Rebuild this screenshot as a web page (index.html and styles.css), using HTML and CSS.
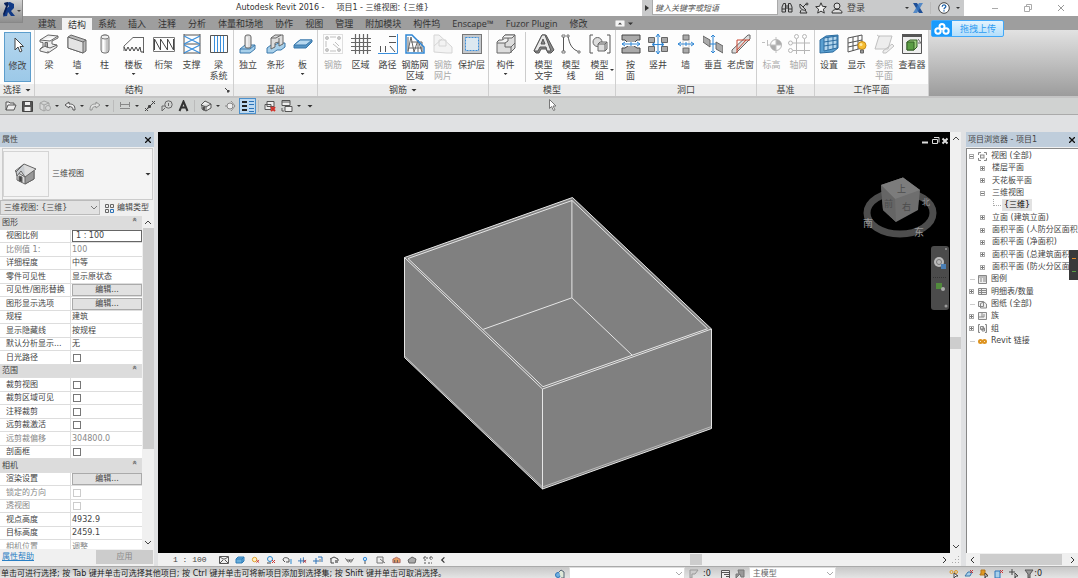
FILE: index.html
```html
<!DOCTYPE html>
<html lang="zh-CN">
<head>
<meta charset="utf-8">
<title>Autodesk Revit 2016</title>
<link rel="stylesheet" href="styles.css">
</head>
<body>
<header class="titlebar">
  <button class="app-button" aria-label="应用程序菜单"><svg width="22" height="22" viewBox="0 0 22 22"><path d="M4 3l6-1 4 2v4l-3 3 4 5h-4l-3-4-1 4-4 .500 2-7 4-3-1-2-3 1z" fill="#123a86"/><path d="M4 3l4-1v4L4 16 3 14l3-8z" fill="#0a1f55"/><path d="M17 10h4l-2 2z" fill="#444"/></svg></button>
  <h1 class="title">Autodesk Revit 2016 -<span class="doc">项目1 - 三维视图: {三维}</span></h1>
  <div class="infocenter">
    <button class="mini" aria-label="展开"><svg width="4" height="6"><path d="M0 0l4 3-4 3z" fill="#333"/></svg></button>
    <input class="search" type="text" placeholder="键入关键字或短语" aria-label="搜索">
    <button class="ic" aria-label="查找"><svg width="12" height="12" viewBox="0 0 12 12" fill="none" stroke="#333"><path d="M1 10V5l1.500-3.500h2V10zM7.500 10V1.500h2L11 5v5zM4.500 4h3M4.500 6h3M1 7h3M8 7h3"/></svg></button>
    <button class="ic" aria-label="通讯中心"><svg width="12" height="12" viewBox="0 0 12 12" fill="none" stroke="#333"><path d="M2 2l6 6c-4 1-7-2-6-6zM5 5l3-3M3 8l-1 3h7l-2-3"/><circle cx="9" cy="2" r="1"/></svg></button>
    <button class="ic" aria-label="收藏夹"><svg width="12" height="12" viewBox="0 0 12 12"><path d="M6 .8l1.500 3.500 3.800.4-2.900 2.500.9 3.900L6 9.100l-3.300 2 .9-3.900L.7 4.700l3.800-.4z" fill="#eee" stroke="#333"/></svg></button>
    <button class="ic login" aria-label="登录"><svg width="12" height="12" viewBox="0 0 12 12" fill="#ddd" stroke="#333"><path d="M1 11c0-3 2-3 3.500-3.500h3C9 8 11 8 11 11z"/><circle cx="6" cy="4" r="3"/></svg>登录</button>
    <span class="spring"></span>
    <span class="caret"></span>
    <button class="ic" aria-label="Exchange"><svg width="12" height="12" viewBox="0 0 12 12"><path d="M1 1h4l6 10H7z" fill="#1f4f96"/><path d="M7 1h4L5 11H1z" fill="#3778c4" opacity=".8"/></svg></button>
    <span class="vsep"></span>
    <button class="ic help" aria-label="帮助"><svg width="12" height="12" viewBox="0 0 12 12"><circle cx="6" cy="6" r="5.300" fill="#fff" stroke="#444"/><path d="M4.200 4.800c0-2.500 3.600-2.300 3.600-.3C7.800 5.800 6 5.800 6 7.300M6 8.200v1.200" fill="none" stroke="#1e62a8" stroke-width="1.300"/></svg></button>
    <span class="caret"></span>
  </div>
  <div class="winctl">
    <button aria-label="最小化"><svg width="8" height="8"><path d="M1 4.500h6" stroke="#aaa"/></svg></button>
    <button aria-label="还原"><svg width="8" height="8" fill="none" stroke="#aaa"><path d="M.5 2.500h5v5h-5zM2.500 2V.5h5v5H6"/></svg></button>
    <button aria-label="关闭"><svg width="8" height="8" stroke="#999"><path d="M1 1l6 6M7 1L1 7"/></svg></button>
  </div>
</header>

<nav class="tabs">
  <button>建筑</button><button class="on">结构</button><button>系统</button><button>插入</button><button>注释</button><button>分析</button><button>体量和场地</button><button>协作</button><button>视图</button><button>管理</button><button>附加模块</button><button>构件坞</button><button>Enscape™</button><button>Fuzor Plugin</button><button>修改</button>
  <button class="ribbon-toggle" aria-label="最小化功能区"><svg width="18" height="7"><rect x=".5" y=".5" width="9" height="6" rx="1" fill="#f4f4f4" stroke="#ccc"/><path d="M3 4.500h4L5 2.500z" fill="#444"/><path d="M13 2.500h5L15.500 5z" fill="#333"/></svg></button>
</nav>

<section class="ribbon">
  <div class="panel p-select"><div class="tools">
    <button class="tool modify"><svg width="20" height="20" viewBox="0 0 20 20"><path d="M7 3v12l3-3 2 5 2-1-2-4.500h3.500z" fill="#fff" stroke="#444"/></svg>修改</button>
  </div><div class="name">选择 <span class="caret"></span></div></div>

  <div class="panel p-struct"><div class="tools">
    <button class="tool"><svg width="20" height="20" viewBox="0 0 20 20" stroke="#666" fill="#eee"><path d="M1 6l8-5 10 1-8 5zM1 6v2l3 .5v4L1 15v2l8 2 9-6v-2l-5-1V7l6-3V2"/><path d="M1 15l5-3 5 2 7-3M9 17v2" fill="none"/><path d="M6 8.500h2.500v5L6 12z" fill="#aaa"/></svg>梁</button>
    <button class="tool"><svg width="20" height="20" viewBox="0 0 20 20" stroke="#666"><path d="M1 3l3-2 15 5v11l-3 2L1 14z" fill="#bbb"/><path d="M1 3l15 5v11L1 14z" fill="#e3e3e3"/><path d="M16 8l3-2" /></svg>墙<i class="caret"></i></button>
    <button class="tool n27"><svg width="20" height="20" viewBox="0 0 20 20" stroke="#777"><rect x="6" y="1" width="8" height="18" rx="3" fill="#ddd"/><path d="M8.500 4v14" stroke="#fff" stroke-width="2"/><path d="M12 4v14" stroke="#aaa"/><ellipse cx="10" cy="3" rx="4" ry="2" fill="#eee"/></svg>柱</button>
    <button class="tool n31"><svg width="22" height="20" viewBox="0 0 22 20" fill="none" stroke="#666"><path d="M1 12L10 3.500h11M1 12v5M20.500 3v16"/><path d="M1 13l2 4 2-4 2 4 2-4 2 4 2-4 2 4 2-4 1 5h3" stroke="#444"/></svg>楼板<i class="caret"></i></button>
    <button class="tool n29"><svg width="22" height="20" viewBox="0 0 22 20" fill="none" stroke="#444"><path d="M.5 3.500h21v14H.5z" stroke="#777"/><path d="M1.500 5v11M7.500 5v11M14.500 5v11M20.500 5v11M1.500 5l6 11M7.500 5l7 11M14.500 5l6 11" /></svg>桁架</button>
    <button class="tool n27"><svg width="20" height="20" viewBox="0 0 20 20" fill="none" stroke="#555"><path d="M2 0v20M18 0v20M2 1h16M2 10h16M2 19h16"/><path d="M2 2l16 8M18 2L2 10M2 11l16 8M18 11L2 19" stroke="#3a8fdc" stroke-width="1.300"/></svg>支撑</button>
    <button class="tool n27"><svg width="20" height="20" viewBox="0 0 20 20" fill="none" stroke="#3a8fdc"><path d="M5.500 1v18M8.500 1v18M11.500 1v18M14.500 1v18"/><path d="M1.500 1.500h17v17h-17z" stroke="#555"/></svg>梁<br>系统</button>
  </div><div class="name">结构<svg class="launcher" width="5" height="5"><path d="M0 0l3 3M4 2v2H2z" stroke="#444" fill="#444"/></svg></div></div>

  <div class="panel p-found"><div class="tools">
    <button class="tool"><svg width="20" height="20" viewBox="0 0 20 20"><path d="M2 15l5-4h10v4l-5 4H2z" fill="#a8d0ea" stroke="#3a79ac"/><path d="M2 15h10l5-4" fill="none" stroke="#3a79ac"/><rect x="7" y="1" width="6" height="13" rx="2" fill="#ddd" stroke="#666"/><path d="M9 3v10" stroke="#fff"/></svg>独立</button>
    <button class="tool n27"><svg width="20" height="20" viewBox="0 0 20 20"><path d="M1 14l4-3h3l5-2h6v4l-4 3h-4l-4 3H1z" fill="#a8d0ea" stroke="#3a79ac"/><path d="M5 4l4-3h8v9l-4 2V8l-4 1v4l-4 2z" fill="#ddd" stroke="#666"/><path d="M5 4h5l5-3M13 8V4" fill="none" stroke="#666"/></svg>条形</button>
    <button class="tool n27"><svg width="20" height="20" viewBox="0 0 20 20"><path d="M1 11l6-5h12v2l-6 6H1z" fill="#5594c4" stroke="#3a79ac"/><path d="M1 11l6-5h12l-6 5z" fill="#b7d8ef" stroke="#3a79ac"/></svg>板<i class="caret"></i></button>
  </div><div class="name">基础</div></div>

  <div class="panel p-rebar"><div class="tools">
    <button class="tool" disabled><svg width="20" height="20" viewBox="0 0 20 20" fill="none" stroke="#999"><rect x=".5" y=".5" width="19" height="19" stroke="#ccc"/><g fill="#aaa"><circle cx="4" cy="4" r="1.500"/><circle cx="16" cy="4" r="1.500"/><circle cx="4" cy="16" r="1.500"/><circle cx="16" cy="16" r="1.500"/></g><path d="M7 3h6M7 17h6M3 7v6M10 10l5 4M12 8l4 4"/></svg>钢筋</button>
    <button class="tool n27"><svg width="20" height="20" viewBox="0 0 20 20" stroke="#666"><path d="M4.500 0v20M8.500 0v20M12.500 0v20M16.500 0v20M0 4.500h20M0 8.500h20M0 12.500h20M0 16.500h20" stroke-width="1.200"/></svg>区域</button>
    <button class="tool n27"><svg width="20" height="20" viewBox="0 0 20 20" fill="none" stroke="#555"><path d="M11 2.500h7M11 8.500h7M2.500 12v6M7.500 12v6M12 12l5 6"/><path d="M0 19.500h19.500V0" stroke="#3a8fdc"/></svg>路径</button>
    <button class="tool"><svg width="20" height="20" viewBox="0 0 20 20" fill="none" stroke="#666"><path d="M3 3v15M6 3L3 17M6 3l3 15M13 6v12M17 8v10M9 18l4-12M13 6l4 12M6 8h11M4 14h13"/><path d="M1 1h6l12 12v6H1z" stroke="#2f86d4" stroke-width="1.500"/></svg>钢筋网<br>区域</button>
    <button class="tool" disabled><svg width="20" height="20" viewBox="0 0 20 20" fill="#eee" stroke="#bbb"><path d="M1 1h5l13 12v6h-5L1 18zM6 6h7v6H6zM1 12l8-7" /></svg>钢筋<br>网片</button>
    <button class="tool n29"><svg width="20" height="20" viewBox="0 0 20 20"><rect x=".5" y=".5" width="19" height="19" fill="#c4c8cc" stroke="#777"/><rect x="3.500" y="3.500" width="13" height="13" fill="#dce8f0" stroke="#3a8fdc" stroke-dasharray="2 1"/></svg>保护层</button>
  </div><div class="name">钢筋 <span class="caret"></span></div></div>

  <div class="panel p-model"><div class="tools">
    <button class="tool n31"><svg width="20" height="20" viewBox="0 0 20 20" stroke="#666"><path d="M1 8l2-2h4V3l2-2h10v13l-5 5H1z" fill="#ddd"/><path d="M7 6V3l2-2h10l-3 3H8M1 9h8l3-2V4" fill="#f4f4f4"/><path d="M9 9v4h6v6M15 13l4-4" fill="none"/></svg>构件<i class="caret"></i></button>
    <span class="divider"></span>
    <button class="tool n27"><svg width="22" height="20" viewBox="0 0 22 20" stroke="#555"><path d="M1 17L9 1h4l8 15-3 3h-3l-2-4H8l-2 4H3z" fill="#888"/><path d="M1 17L9 1h3l6 16h-4l-1-4H7l-2 4zM8 10h4l-2-5z" fill="#e8e8e8"/></svg>模型<br>文字</button>
    <button class="tool"><svg width="20" height="20" viewBox="0 0 20 20" fill="none" stroke="#555"><path d="M2.500 2v16M7 1c1 9 4 15 12 17"/><path d="M1 1h3v2H1zM1 17h3v2H1zM6 1h2v2H6zM17 17h2v2h-2z" fill="#fff" stroke="#777"/></svg>模型<br>线</button>
    <button class="tool n29 side"><svg width="22" height="20" viewBox="0 0 22 20" fill="none" stroke="#555"><path d="M4 1H1v18h3M18 1h3v18h-3"/><circle cx="8.500" cy="8" r="4.500" fill="#ddd" stroke="#666"/><path d="M9 10l2-2h7v7l-2 2H9z" fill="#ddd" stroke="#666"/><path d="M9 10h7v7M16 10l2-2" stroke="#666"/></svg>模型<br>组<i class="caret"></i></button>
  </div><div class="name">模型</div></div>

  <div class="panel p-open"><div class="tools">
    <button class="tool n27"><svg width="20" height="20" viewBox="0 0 20 20"><path d="M1 1h18v5h-3l-3 3v3l3 2h3v5H1v-5h3l3-2V9L4 6H1z" fill="#aaa" stroke="#444"/><path d="M0 10h20" stroke="#fff" stroke-width="4"/><path d="M1 10h18M4 8l-3 2 3 2M16 8l3 2-3 2M10 8v4" fill="none" stroke="#2f86d4"/></svg>按<br>面</button>
    <button class="tool"><svg width="20" height="20" viewBox="0 0 20 20"><g fill="#aaa" stroke="#666"><path d="M.5 3.500h6v5h-6zM13.500 3.500h6v5h-6zM.5 12.500h6v5h-6zM13.500 12.500h6v5h-6z"/></g><path d="M10 0v20M8 3l2-3 2 3M8 17l2 3 2-3M5 10.500h10M7 8.500l-3 2 3 2M13 8.500l3 2-3 2" fill="none" stroke="#2f86d4"/></svg>竖井</button>
    <button class="tool n27"><svg width="20" height="20" viewBox="0 0 20 20"><path d="M7 1h6v5H7zM7 14h6v5H7z" fill="#aaa" stroke="#666"/><path d="M7 6v8M13 6v8" stroke="#ccc"/><path d="M2 10h16M5 8l-3 2 3 2M15 8l3 2-3 2M10 8v4" fill="none" stroke="#2f86d4"/></svg>墙</button>
    <button class="tool"><svg width="20" height="20" viewBox="0 0 20 20"><path d="M0 2l7 4v7L0 8zM13 8l7 4v7l-7-4z" fill="#aaa" stroke="#666"/><path d="M10 1v18M8 3l2-2 2 2M8 17l2 2 2-2M7 10h6" fill="none" stroke="#2f86d4"/></svg>垂直</button>
    <button class="tool n27"><svg width="20" height="20" viewBox="0 0 20 20" fill="#ddd"><path d="M1 16L17 1h2v4L5 19H1z" stroke="#666"/><path d="M6 19V6h13M6 16l9-10" fill="none" stroke="#c8452f"/></svg>老虎窗</button>
  </div><div class="name">洞口</div></div>

  <div class="panel p-datum"><div class="tools">
    <button class="tool n27" disabled><svg width="22" height="20" viewBox="0 0 22 20"><circle cx="15" cy="11" r="5.500" fill="#fff" stroke="#888"/><path d="M15 11V5.500A5.500 5.500 0 0120.500 11zM15 11v5.500A5.500 5.500 0 019.500 11z" fill="#777"/><path d="M1 8.500h3M6.500 6v6M7 11h14M15 3v16" stroke="#999"/></svg>标高</button>
    <button class="tool n27" disabled><svg width="22" height="20" viewBox="0 0 22 20" fill="none" stroke="#888"><circle cx="8.500" cy="2.500" r="2"/><circle cx="16.500" cy="2.500" r="2"/><circle cx="2.500" cy="9" r="2"/><circle cx="2.500" cy="16.500" r="2"/><path d="M8.500 5v15M16.500 5v15M5 9h17M5 16.500h17"/></svg>轴网</button>
  </div><div class="name">基准</div></div>

  <div class="panel p-work"><div class="tools">
    <button class="tool"><svg width="20" height="20" viewBox="0 0 20 20"><path d="M1 6l6-4 12-1v13l-5 4-13 1z" fill="#5a9fd0" stroke="#2c6ca0"/><path d="M5 4l13-2v12L5 17z" fill="#b5d7ee" stroke="#2c6ca0"/><path d="M9 3v13M14 3v12M5 8l13-2M5 12l13-2" stroke="#2c6ca0"/></svg>设置</button>
    <button class="tool n27"><svg width="20" height="20" viewBox="0 0 20 20"><path d="M1 4l14-3v13L1 18zM6 3v14M11 2v13M1 9l14-3M1 13l14-3" fill="none" stroke="#555"/><circle cx="15" cy="11.500" r="4" fill="#f6bd32" stroke="#c78a13"/><path d="M13.500 16h3v3h-3z" fill="#999" stroke="#666"/><circle cx="14" cy="10.500" r="1.500" fill="#ffe9a0"/></svg>显示</button>
    <button class="tool" disabled><svg width="20" height="20" viewBox="0 0 20 20" fill="#e4e4e4" stroke="#999"><path d="M5 2h13l-4 13H1zM3 1l3 2M9 17l9-7 2 2-8 7h-3z"/></svg>参照<br>平面</button>
    <button class="tool"><svg width="20" height="20" viewBox="0 0 20 20"><path d="M.5.500h19v19H.5z" fill="#eee" stroke="#555"/><path d="M0 0h20v3H0z" fill="#555"/><path d="M5 8l3-2h7v7l-3 3H5z" fill="#9bcf7c" stroke="#355f27"/><path d="M5 8h7v8H5z" fill="#5a9d43" stroke="#355f27"/><path d="M16 5l3 4M16 9h4" stroke="#666"/></svg>查看器</button>
  </div><div class="name">工作平面</div></div>
  <div class="filler"></div>
</section>

<section class="qat">
  <button aria-label="打开"><svg width="12" height="10" viewBox="0 0 12 10" fill="#eee" stroke="#555"><path d="M1 9V1h3l1 1h4v2M1 9l2-5h8L9 9z"/></svg></button>
  <button aria-label="保存"><svg width="11" height="11" viewBox="0 0 11 11"><path d="M.5.500h10v10H.5z" fill="#555" stroke="#444"/><path d="M3 1h5v3H3zM2.500 6h6v4h-6z" fill="#eee"/></svg></button>
  <button disabled aria-label="同步"><svg width="12" height="12" viewBox="0 0 12 12" fill="#ddd" stroke="#777"><path d="M1 3l4-2 5 2v5l-5 3-4-2zM1 3l4 2 5-2M5 5v6"/><circle cx="9" cy="8" r="2.500"/></svg></button><span class="caret"></span>
  <button aria-label="放弃"><svg width="12" height="10" viewBox="0 0 12 10" fill="#eee" stroke="#555"><path d="M1 4l4-3v2c4 0 6 1 6 6H9C9 6 7 5.500 5 5.500V7z"/></svg></button><span class="caret"></span>
  <button disabled aria-label="重做"><svg width="12" height="10" viewBox="0 0 12 10" fill="#eee" stroke="#555"><path d="M11 4L7 1v2C3 3 1 4 1 9h2c0-3 2-3.500 4-3.500V7z"/></svg></button><span class="caret"></span>
  <span class="vsep"></span>
  <button aria-label="测量"><svg width="12" height="8" stroke="#888" fill="none"><path d="M1 2.500h10M1 6.500h10M1.500 0v5M10.500 0v5"/></svg></button><span class="caret"></span>
  <button aria-label="对齐尺寸标注"><svg width="12" height="12" stroke="#444"><path d="M1 11L11 1M1 8l3 3M8 1l3 3M4 8l1-3 2 2z" fill="#444"/></svg></button>
  <button aria-label="按类别标记"><svg width="12" height="12" viewBox="0 0 12 12" fill="none" stroke="#666"><circle cx="7.500" cy="4.500" r="3.700"/><path d="M7.500 3v3M1 11V6h3M1 11l3-3"/></svg></button>
  <button aria-label="文字"><svg width="11" height="12" viewBox="0 0 11 12" stroke="#333" stroke-width="2" fill="none"><path d="M1.500 11l4-9.500 4 9.500M3 7.500h5"/></svg></button>
  <span class="vsep"></span>
  <button aria-label="默认三维视图"><svg width="12" height="12" viewBox="0 0 12 12" fill="#eee" stroke="#555"><path d="M1 5l4-4 6 3v4l-5 3-4-2V5M1 5l5 2 5-3M6 7v4"/><path d="M3 7h1.500v3H3z" fill="#444"/></svg></button><span class="caret"></span>
  <button aria-label="剖面"><svg width="12" height="12" fill="#eee" stroke="#888"><path d="M0 6h2M6 1l4 5-4 5"/><circle cx="5" cy="6" r="3"/></svg></button>
  <button class="on" aria-label="细线"><svg width="12" height="12"><path d="M0 2h5M0 6h5M0 10h5" stroke="#222" stroke-width="2"/><path d="M7 1.500h5M7 4.500h5M7 8.500h5M7 11.500h5" stroke="#2c73b8"/></svg></button>
  <span class="vsep"></span>
  <button aria-label="关闭隐藏窗口"><svg width="12" height="12" fill="#eee" stroke="#555"><path d="M3 1.500h7v5H3zM1 4.500h6v5H1z"/><path d="M7 7l4 4M11 7l-4 4" stroke="#d2322a" stroke-width="2"/></svg></button>
  <button aria-label="切换窗口"><svg width="12" height="12" fill="#eee" stroke="#555"><path d="M1 .5h8v5H1zM1 2h8M4 6.500h7v5H4zM1 8v3h2"/></svg></button><span class="caret"></span>
  <span class="caret big"></span>
</section>

<main class="work">
  <aside class="props">
    <h2 class="dock-title">属性<button aria-label="关闭属性"><svg width="6" height="6" stroke="#111"><path d="M0 0l6 6M6 0L0 6" stroke-width="1.300"/></svg></button></h2>
    <button class="type"><span class="thumb"><svg width="24" height="24" viewBox="0 0 24 24" stroke="#666"><path d="M3 10v8l8 4 9-5V9l-8-5z" fill="#ddd"/><path d="M11 13v9l9-5V8z" fill="#999"/><path d="M1 9l9-7 12 5-11 8z" fill="#ddd"/><path d="M10 2l-8 8 1 4 4-5 4 6" fill="#c9cdd1"/><path d="M5 14l3 1v5l-3-1z" fill="#444"/></svg></span><span>三维视图</span><span class="caret big"></span></button>
    <div class="instance"><select aria-label="实例"><option>三维视图: {三维}</option></select><button><svg width="9" height="9" fill="#eee" stroke="#666"><path d="M.5.500h3v3h-3zM5.500.500h3v3h-3zM.5 5.500h3v3h-3z"/><path d="M5.500 5.500h3v3h-3z" stroke="#2c73b8"/></svg>编辑类型</button></div>
    <div class="grid-wrap">
      <div class="grid-clip"><table class="grid">
        <tr class="g"><th colspan="2">图形<b>«</b></th></tr>
        <tr><th><label for="scale">视图比例</label></th><td><input id="scale" class="val" type="text" value="1 : 100"></td></tr>
        <tr class="off"><th>比例值 1:</th><td>100</td></tr>
        <tr><th>详细程度</th><td>中等</td></tr>
        <tr><th>零件可见性</th><td>显示原状态</td></tr>
        <tr><th>可见性/图形替换</th><td><button>编辑...</button></td></tr>
        <tr><th>图形显示选项</th><td><button>编辑...</button></td></tr>
        <tr><th>规程</th><td>建筑</td></tr>
        <tr><th>显示隐藏线</th><td>按规程</td></tr>
        <tr><th>默认分析显示...</th><td>无</td></tr>
        <tr><th><label for="c1">日光路径</label></th><td><input id="c1" type="checkbox"></td></tr>
        <tr class="g"><th colspan="2">范围<b>«</b></th></tr>
        <tr><th><label for="c2">裁剪视图</label></th><td><input id="c2" type="checkbox"></td></tr>
        <tr><th><label for="c3">裁剪区域可见</label></th><td><input id="c3" type="checkbox"></td></tr>
        <tr><th><label for="c4">注释裁剪</label></th><td><input id="c4" type="checkbox"></td></tr>
        <tr><th><label for="c5">远剪裁激活</label></th><td><input id="c5" type="checkbox"></td></tr>
        <tr class="off"><th>远剪裁偏移</th><td>304800.0</td></tr>
        <tr><th><label for="c6">剖面框</label></th><td><input id="c6" type="checkbox"></td></tr>
        <tr class="g"><th colspan="2">相机<b>«</b></th></tr>
        <tr><th>渲染设置</th><td><button>编辑...</button></td></tr>
        <tr class="off"><th><label for="c7">锁定的方向</label></th><td><input id="c7" type="checkbox" disabled></td></tr>
        <tr class="off"><th><label for="c8">透视图</label></th><td><input id="c8" type="checkbox" disabled></td></tr>
        <tr><th>视点高度</th><td>4932.9</td></tr>
        <tr><th>目标高度</th><td>2459.1</td></tr>
        <tr class="off"><th>相机位置</th><td>调整</td></tr>
      </table></div>
      <div class="vscroll"><svg width="6" height="4"><path d="M0 4l3-3 3 3" fill="none" stroke="#444"/></svg><span class="bar"></span><svg width="6" height="4"><path d="M0 0l3 3 3-3" fill="none" stroke="#444"/></svg></div>
    </div>
    <div class="props-foot"><a href="#help">属性帮助</a><button disabled>应用</button></div>
  </aside>

  <section class="view">
    <div class="canvas">
      <svg class="model" viewBox="158 132 792 421" preserveAspectRatio="xMidYMid slice">
        <path d="M404.500 257.500L572.500 197.500 711.500 329V428.500L542.500 489 404.500 357.500z" fill="#808080"/>
        <g fill="none" stroke="#e6e6e6">
          <path d="M404.500 257.500L572.500 197.500 711.500 329 542.500 389z"/>
          <path d="M408 258.500L572 200.500 707.500 328.700 543 386.700z"/>
          <path d="M404.500 257.500V357.500L542.500 489 711.500 428.500V329M542.500 389V489"/>
          <path d="M404.500 356L542.500 487 711.500 426.500" stroke="#bbb"/>
          <path d="M571.900 200.500V297.800L483.300 329.300M571.900 297.800L632.300 355.300"/>
        </g>
      </svg>
      <div class="mdi"><svg width="26" height="8" stroke="#ddd" fill="none"><path d="M0 5.500h6" stroke-width="2"/><path d="M10.500 2.500h5v4h-5zM12 .5h5v5"/><path d="M20.500 1.500l5 5M25.500 1.500l-5 5" stroke-width="2"/></svg></div>
      <svg class="cube" width="80" height="66" viewBox="860 175 80 66">
        <ellipse cx="900" cy="213" rx="33" ry="21" fill="none" stroke="#4d4d4d" stroke-width="7"/>
        <path d="M881 185l22-7.500 17 12.500-2 20-22 12-13-12z" fill="#6e6e6e"/>
        <path d="M881 185l22-7.500 17 12.500-25 9z" fill="#7c7c7c"/><path d="M881 185l14 14 1 23-13-12z" fill="#656565"/>
        <g font-size="9" fill="#4c4c4c"><text x="897" y="192">上</text><text x="884" y="207">前</text><text x="902" y="210">右</text></g>
        <g font-size="10" fill="#999"><text x="863" y="227">南</text><text x="914" y="236">东</text><text x="922" y="205" font-size="8">北</text></g>
      </svg>
      <div class="navbar"><svg width="18" height="64" viewBox="0 0 18 64"><circle cx="15" cy="3" r="1" fill="#999"/><circle cx="8" cy="16" r="5" fill="#bbb"/><circle cx="8" cy="16" r="2.500" fill="#bbb" stroke="#777"/><path d="M10 18h5v5h-5z" fill="#4a7fb5"/><path d="M2 31.500h14" stroke="#333" stroke-dasharray="1 1"/><path d="M5 37h6v6H5z" fill="#518a3c"/><circle cx="12" cy="43" r="2" fill="#aaa"/><circle cx="15" cy="60" r="1.500" fill="#999"/></svg></div>
    </div>
    <div class="vscroll right"><svg width="6" height="4"><path d="M0 4l3-3 3 3" fill="none" stroke="#444"/></svg><span class="bar"></span><svg width="6" height="4"><path d="M0 0l3 3 3-3" fill="none" stroke="#444"/></svg></div>
    <div class="viewbar">
      <span class="scale">1 : 100</span>
      <div class="vicons">
        <svg viewBox="0 0 10 8"><path d="M.5.500h9v7h-9zM1 1l3 2h2l3-2M1 7l3-3M9 7L6 4" stroke="#555" fill="#eee"/></svg>
        <svg viewBox="0 0 10 8"><path d="M1 3l2-2h6v4L7 7H1z" fill="#68aedb" stroke="#2f7db8"/><path d="M1 3h6v4M7 3l2-2" stroke="#2f7db8" fill="none"/></svg>
        <svg viewBox="0 0 10 8"><circle cx="4" cy="3.500" r="2.500" fill="#fff1c0" stroke="#dc9a1e"/><path d="M6 4l3 3M9 4L6 7" stroke="#c33"/></svg>
        <svg viewBox="0 0 10 8"><circle cx="4" cy="3" r="2.500" fill="#eee" stroke="#2c8bd0"/><path d="M1 7h4" stroke="#444"/><path d="M6 4l3 3M9 4L6 7" stroke="#c33"/></svg>
        <svg viewBox="0 0 10 8"><path d="M1 4c0-3 4-3 6-1v3H4M1 4l2 2" fill="#eee" stroke="#555"/><path d="M9 3v5" stroke="#2c8bd0"/></svg>
        <svg viewBox="0 0 10 8"><path d="M0 5h9M3 2v6M6 1v6" stroke="#2c73b8"/><path d="M6 4l3 3M9 4L6 7" stroke="#c33"/></svg>
        <svg viewBox="0 0 10 8"><path d="M0 5h6M3 2v6M5 1h4v5" stroke="#2c73b8" fill="none"/><path d="M7 3v3" stroke="#777"/></svg>
        <svg viewBox="0 0 10 8"><path d="M1 3l4-2 4 2v2M2 3v4h3" fill="none" stroke="#444"/><path d="M6 4h3v3H6z" fill="#888"/></svg>
        <svg viewBox="0 0 10 8"><path d="M0 2l2 2h6l2-2M2 4c1 3 3 3 3 0 0 3 3 3 3 0" fill="none" stroke="#555"/></svg>
        <svg viewBox="0 0 10 8"><circle cx="5" cy="3" r="1.700" fill="#cbe7fa" stroke="#3a8fdc"/><path d="M5 5v3" stroke="#555"/></svg>
        <svg viewBox="0 0 10 8"><path d="M1 1h6v6H1zM4 3l5 4" fill="#eee" stroke="#777"/></svg>
        <svg viewBox="0 0 10 8"><path d="M1 7V3l4-2 4 2v4z" fill="#e8a066" stroke="#a66"/><path d="M3 7V4M6 7V4" stroke="#555"/></svg>
        <svg viewBox="0 0 10 8"><path d="M1 4l4-3 4 2-1 4H2z" fill="#aaa" stroke="#666"/></svg>
        <svg viewBox="0 0 10 8"><path d="M2 0v8M0 2h10M8 0v4M5 7h4" stroke="#555" stroke-dasharray="2 1"/></svg>
        <svg viewBox="0 0 10 8"><path d="M6 1L3 4l3 3" fill="none" stroke="#333" stroke-width="1.300"/></svg>
      </div>
      <div class="htrack"><span class="bar"></span></div>
      <svg class="arr" width="4" height="6"><path d="M0 0l3 3-3 3" fill="none" stroke="#333"/></svg>
    </div>
    <div class="grip"><svg width="8" height="8" fill="#aaa"><path d="M6 0h1v1H6zM3 3h1v1H3zM6 3h1v1H6zM0 6h1v1H0zM3 6h1v1H3zM6 6h1v1H6z"/></svg></div>
  </section>

  <aside class="browser">
    <h2 class="dock-title">项目浏览器 - 项目1<button aria-label="关闭项目浏览器"><svg width="6" height="6" stroke="#111"><path d="M0 0l6 6M6 0L0 6" stroke-width="1.300"/></svg></button></h2>
    <ul class="tree">
      <li class="l0"><i class="x minus"></i><svg viewBox="0 0 9 9"><path d="M.5 3V.5H3M6 .5h2.500V3M8.500 6v2.500H6M3 8.500H.5V6" /><rect x="2.500" y="3" width="3.500" height="3"/></svg>视图 (全部)</li>
      <li class="l1"><i class="x plus"></i>楼层平面</li>
      <li class="l1"><i class="x plus"></i>天花板平面</li>
      <li class="l1"><i class="x minus"></i>三维视图</li>
      <li class="l2"><i class="elbow"></i><span class="sel">{三维}</span></li>
      <li class="l1"><i class="x plus"></i>立面 (建筑立面)</li>
      <li class="l1"><i class="x plus"></i>面积平面 (人防分区面积)</li>
      <li class="l1"><i class="x plus"></i>面积平面 (净面积)</li>
      <li class="l1"><i class="x plus"></i>面积平面 (总建筑面积)</li>
      <li class="l1"><i class="x plus"></i>面积平面 (防火分区面积)</li>
      <li class="l0"><i class="x none"></i><svg viewBox="0 0 9 9"><path d="M.5.500h8v8h-8zM1 2h7M2 4h2M5 4h3M2 6h2M5 6h3"/></svg>图例</li>
      <li class="l0"><i class="x plus"></i><svg viewBox="0 0 9 9"><path d="M.5 1.500h8v6h-8zM.5 3.500h8M.5 5.500h8M3.500 2v5"/></svg>明细表/数量</li>
      <li class="l0"><i class="x none"></i><svg viewBox="0 0 9 9"><path d="M.5 1.500h5v5h-5zM2.500 3.500L6 2l2.500 2v4h-6z"/></svg>图纸 (全部)</li>
      <li class="l0"><i class="x plus"></i><svg viewBox="0 0 9 9"><path d="M.5.500h8v7h-8zM4 1v4M1 5h5M6 2v3"/></svg>族</li>
      <li class="l0"><i class="x plus"></i><svg viewBox="0 0 9 9"><path d="M2 .5H.5v8H2M7 .5h1.500v8H7M2.500 2.500h3v3h-3zM4 4h2.500v3H4z"/></svg>组</li>
      <li class="l0"><i class="x none"></i><svg class="link" viewBox="0 0 9 9"><circle cx="2.500" cy="4.500" r="1.500"/><circle cx="6.500" cy="4.500" r="1.500"/></svg>Revit 链接</li>
    </ul>
    <div class="hscroll"><svg width="4" height="6"><path d="M3 0L0 3l3 3" fill="none" stroke="#333"/></svg><span class="bar"></span><svg width="4" height="6"><path d="M0 0l3 3-3 3" fill="none" stroke="#333"/></svg></div>
    <div class="side-tab"><span></span><span class="green"></span></div>
  </aside>
</main>

<footer class="status">
  <span class="hint">单击可进行选择; 按 Tab 键并单击可选择其他项目; 按 Ctrl 键并单击可将新项目添加到选择集; 按 Shift 键并单击可取消选择。</span>
  <div class="worksets">
    <svg width="10" height="10" viewBox="0 0 10 10"><circle cx="3" cy="6" r="2.500" fill="#6fb0e0" stroke="#2c73b8"/><path d="M4 3l2-2 3 2v6H6" fill="#dfe8d8" stroke="#567"/></svg>
    <select class="ws" aria-label="工作集"><option></option></select>
    <svg width="10" height="10" viewBox="0 0 10 10" stroke="#999" fill="#ccc"><path d="M1 1h8L6 5H3v4H1z"/></svg>
    <span class="cnt">:0</span>
    <svg width="10" height="10" viewBox="0 0 10 10" stroke="#555" fill="#eee"><path d="M.5 1.500h8v8h-8zM.5 3.500h8M3 5.500h5M5 7.500h3"/></svg>
    <svg width="10" height="10" viewBox="0 0 10 10" stroke="#777" fill="#999"><path d="M3 1h6v7H6L5 5 1 9V5h3z"/></svg>
    <select class="opt" aria-label="设计选项"><option>主模型</option></select>
  </div>
  <div class="picks">
    <svg viewBox="0 0 10 10"><circle cx="2.500" cy="3" r="1.500" fill="none" stroke="#e09a22"/><circle cx="7" cy="3" r="1.500" fill="none" stroke="#e09a22"/><path d="M5 4v5l2-2h2z" fill="#fff" stroke="#444"/></svg>
    <svg viewBox="0 0 10 10"><path d="M1 7l3-4h4L6 7z" fill="#a8d0ea" stroke="#3a79ac"/><path d="M6 1l3 3M9 1L6 4" stroke="#c33"/></svg>
    <svg viewBox="0 0 10 10"><path d="M2 1h4v4h2v1H1V5h1z" fill="#e09a22" stroke="#b5761a"/><path d="M6 4v5l1-2h2z" fill="#fff" stroke="#444"/></svg>
    <svg viewBox="0 0 10 10"><path d="M1 2h5v7H1z" fill="#a8d0ea" stroke="#2c73b8"/><path d="M6 1l3 3M9 1L6 4" stroke="#c33"/></svg>
    <svg viewBox="0 0 10 10"><path d="M0 3h6M3 0v6" stroke="#444"/><path d="M6 4v5l1-2h2z" fill="#fff" stroke="#444"/></svg>
    <svg viewBox="0 0 10 10"><path d="M1 1h8L6 5v4H4V5z" fill="#999" stroke="#555"/></svg>
    <span>:0</span>
  </div>
</footer>

<button class="upload"><span><svg width="16" height="12" viewBox="0 0 16 12" fill="none" stroke="#fff" stroke-width="2"><circle cx="8" cy="3.500" r="2.500"/><circle cx="4" cy="8" r="2.700"/><circle cx="12" cy="8" r="2.700"/></svg></span>拖拽上传</button>
<svg class="pointer" width="8" height="12" viewBox="0 0 8 12"><path d="M.5.500v9l2-2 2 4 1.500-.700-2-3.800h3z" fill="#fff" stroke="#777"/></svg>
</body>
</html>
```
FILE: styles.css
```css
* { box-sizing: border-box; }
body {
  margin: 0; height: 100vh; overflow: hidden; display: flex; flex-direction: column;
  position: relative; background: #e0e1e3; color: #444;
  font: 9px/12px "Open Sans", "Noto Sans CJK SC", sans-serif;
}
button, input, select { font: inherit; color: inherit; margin: 0; padding: 0; border: 0; background: none; border-radius: 0; }
button { display: flex; align-items: center; justify-content: center; white-space: nowrap; }
svg { display: block; flex: none; }
h1, h2, ul { margin: 0; padding: 0; font-size: inherit; font-weight: normal; }
.caret { flex: none; width: 4px; height: 2px; background: #333; clip-path: polygon(0 0, 100% 0, 50% 100%); }
.caret.big { width: 6px; height: 3px; }
.vsep { width: 1px; height: 12px; background: #bbb; }

/* title bar */
.titlebar { flex: none; display: flex; height: 16px; background: #fff; position: relative; }
.app-button { position: absolute; left: 0; top: 0; z-index: 2; width: 23px; height: 23px; background: linear-gradient(#d2d2d2, #8e8e8e); border: 1px solid #888; border-top: 0; border-left: 0; }
.title { flex: 1; padding-left: 236px; font: 8px/16px "DejaVu Sans", "Noto Sans CJK SC", sans-serif; white-space: nowrap; color: #333; }
.doc { margin-left: 12px; }
.infocenter { display: flex; align-items: center; width: 322px; background: #c9cacb; }
.mini { width: 10px; height: 16px; }
.search { width: 126px; height: 15px; align-self: flex-start; background: #fff; border: 1px solid #aaa; border-top: 0; padding-left: 2px; font-size: 8px; font-style: italic; }
.search::placeholder { color: #555; opacity: 1; }
.ic { width: 17px; height: 16px; }
.login { width: auto; gap: 4px; padding-left: 2px; }
.spring { flex: 1; }
.infocenter .vsep { margin: 0 4px; }
.help + .caret { margin: 0 4px; }
.winctl { display: flex; width: 114px; padding-left: 14px; }
.winctl button { width: 33px; height: 16px; }

/* tabs */
.tabs { flex: none; display: flex; height: 14px; padding-left: 32px; background: #9e9e9e; align-items: stretch; }
.tabs button { padding: 0 6px; line-height: 13px; color: #333; }
.tabs .on { background: #f2f2f2; margin-top: 2px; }
.tabs .ribbon-toggle { margin-left: 16px; }

/* ribbon */
.ribbon { flex: none; display: flex; height: 68px; background: #fdfdfd; border-bottom: 2px solid #c4c4c4; }
.panel { flex: none; display: flex; flex-direction: column; border-right: 1px solid #cfcfcf; }
.p-select { width: 35px; } .p-struct { width: 199px; } .p-found { width: 84px; } .p-rebar { width: 171px; }
.p-model { width: 127px; } .p-open { width: 141px; } .p-datum { width: 58px; } .p-work { width: 114px; }
.tools { flex: 1; display: flex; }
.p-rebar .tools, .p-model .tools, .p-open .tools, .p-datum .tools { padding-left: 1px; }
.tool { flex: none; width: 28px; flex-direction: column; justify-content: flex-start; padding-top: 4px; line-height: 11px; position: relative; }
.tool svg { margin-bottom: 5px; }
.tool .caret { margin-top: 3px; }
.n27 { width: 27px; } .n29 { width: 29px; } .n31 { width: 31px; }
.tool:disabled { color: #aaa; }
.tool:disabled svg { opacity: .6; }
.tool.side .caret { position: absolute; right: 0; top: 36px; }
.tool.modify { width: 27px; margin: 2px 0 2px 4px; padding-top: 2px; background: linear-gradient(#b4d6ee, #9cc9e8); border: 1px solid #5c9dcc; }
.divider { width: 1px; margin: 2px 4px; background: #ccc; }
.name { height: 12px; background: #ededed; display: flex; align-items: center; justify-content: center; gap: 4px; position: relative; }
.name .caret { width: 6px; height: 3px; }
.launcher { position: absolute; right: 3px; top: 4px; }
.filler { flex: 1; background: linear-gradient(#e2e2e2, #9c9c9c); }

/* quick access */
.qat { flex: none; display: flex; align-items: center; height: 17px; padding-left: 2px; background: #d0d2d1; border-bottom: 1px solid #aaa; }
.qat button { width: 17px; height: 16px; }
.qat button:disabled { opacity: .5; }
.qat .caret { margin: 0 2px; }
.qat .vsep { margin: 0 2px; }
.qat .on { background: #bcd8f0; border: 1px solid #4b90cc; }
.qat .big { margin-left: 4px; }

/* work area */
.work { flex: 1; min-height: 0; display: flex; padding-top: 17px; font: 8px/12px "DejaVu Sans", "Noto Sans CJK SC", sans-serif; }
.dock-title { flex: none; display: flex; align-items: center; justify-content: space-between; height: 15px; padding: 0 3px 0 2px; background: #bfcddb; }
.props { flex: none; width: 154px; display: flex; flex-direction: column; background: #f0f0f0; }
.type { height: 52px; margin: 1px 1px 0 2px; border: 1px solid #ccc; background: #f4f4f4; justify-content: flex-start; gap: 3px; }
.thumb { width: 46px; height: 46px; border: 1px solid #d4d4d4; display: grid; place-items: center; }
.type .caret { margin: 0 1px 0 auto; }
.instance { display: flex; height: 16px; }
select { appearance: none; }
.instance select { width: 100px; height: 15px; padding-left: 3px; border: 1px solid #bbb; background: #e2e2e2 url("data:image/svg+xml,%3Csvg xmlns='http://www.w3.org/2000/svg' width='6' height='4'%3E%3Cpath d='M0 0l3 3 3-3' fill='none' stroke='%23777'/%3E%3C/svg%3E") no-repeat right 2px center; }
.instance button { flex: 1; gap: 3px; }
.grid-wrap { flex: 1; min-height: 0; display: flex; }
.grid-clip { flex: 1; overflow: hidden; background: #fff; }
.grid { width: 100%; border-spacing: 0; table-layout: fixed; }
.grid tr { height: 13px; }
.grid tr:nth-child(odd) { height: 14px; }
.grid th, .grid td { padding: 0; height: inherit; line-height: 12px; border-bottom: 1px solid #ddd; text-align: left; font-weight: normal; white-space: nowrap; vertical-align: middle; }
.grid th { width: 71px; padding-left: 6px; border-right: 1px solid #ddd; }
.grid td { padding-left: 1px; }
.grid .g th { padding-left: 2px; background: #dcdcdc; }
.g b { float: right; margin-right: 2px; width: 6px; height: 10px; line-height: 10px; font-weight: normal; writing-mode: vertical-rl; }
.off { color: #888; }
.val { display: block; width: 100%; height: 12px; border: 1px solid #666; padding-left: 3px; }
.grid button { width: 100%; height: 12px; background: #e1e1e1; border: 1px solid #aaa; line-height: 10px; }
input[type=checkbox] { appearance: none; display: block; width: 8px; height: 8px; margin-left: 1px; border: 1px solid #777; background: #fff; }
input[type=checkbox]:disabled { border-color: #ccc; }
.vscroll { flex: none; width: 12px; display: flex; flex-direction: column; align-items: center; padding: 4px 0; background: #f0f0f0; }
.vscroll .bar { width: 11px; height: 68%; margin: 4px 0 auto; background: #cdcdcd; }
.props-foot { flex: none; height: 17px; display: flex; justify-content: space-between; align-items: center; padding: 0 1px 2px 2px; }
.props-foot a { color: #2a7fc4; }
.props-foot button { width: 57px; height: 14px; background: #ccc; color: #888; }

.view { flex: 1; min-width: 0; margin-left: 4px; display: grid; grid-template: minmax(0, 1fr) 13px / minmax(0, 1fr) 11px; background: #f0f0f0; }
.canvas { position: relative; background: #000; overflow: hidden; }
.model { width: 100%; height: 100%; }
.mdi { position: absolute; right: 2px; top: 5px; }
.cube { position: absolute; right: 10px; top: 43px; }
.navbar { position: absolute; right: 1px; top: 114px; background: #4b4b4b; border-radius: 3px; }
.vscroll.right { width: 11px; }
.vscroll.right .bar { height: 12px; margin: auto 0; }
.viewbar { display: flex; align-items: center; padding: 0 3px 0 15px; }
.scale { width: 46px; font: 8px/12px "Liberation Mono", monospace; }
.vicons { display: flex; gap: 6px; }
.vicons svg { width: 10px; height: 8px; }
.vicons svg:nth-child(3n) { width: 9px; }
.htrack { flex: 1; display: flex; justify-content: center; }
.htrack .bar { width: 12px; height: 11px; background: #cdcdcd; }
.grip { display: grid; place-items: center; }

.browser { flex: none; width: 112px; margin-left: 5px; display: flex; flex-direction: column; position: relative; background: #f0f0f0; }
.tree { flex: 1; min-height: 0; overflow: hidden; list-style: none; margin-top: 1px; padding-top: 1px; background: #fff; border: 1px solid #888; border-width: 1px 0 0 1px; }
.tree li { display: flex; align-items: center; height: 12px; white-space: nowrap; gap: 4px; }
.tree li:nth-child(3n) { height: 13px; }
.l0 { padding-left: 2px; }
.l1 { padding-left: 13px; }
.l2 { padding-left: 26px; }
.x { flex: none; width: 5px; height: 5px; border: 1px solid #aaa; position: relative; }
.x::before { content: ""; position: absolute; left: 0; top: 1px; width: 3px; height: 1px; background: #777; }
.x.plus::after { content: ""; position: absolute; left: 1px; top: 0; width: 1px; height: 3px; background: #777; }
.x.none { border-color: transparent; } .x.none::before { background: #ccc; width: 5px; }
.l1 .x { margin-right: 3px; }
.elbow { width: 8px; height: 7px; margin-bottom: 6px; border: 1px dotted #aaa; border-width: 0 0 1px 1px; }
.tree svg { width: 9px; height: 9px; fill: #eee; stroke: #888; }
.tree svg.link { fill: none; stroke: #dd9320; stroke-width: 2; }
.sel { padding: 0 2px; margin-left: -3px; background: #e2e2e2; color: #000; }
.hscroll { flex: none; height: 13px; display: flex; align-items: center; padding: 0 3px 0 5px; gap: 5px; }
.hscroll .bar { width: 82px; height: 11px; margin-right: auto; background: #cdcdcd; }
.side-tab { position: absolute; right: 0; top: 118px; width: 9px; height: 30px; background: #3a3a3a; display: flex; flex-direction: column; justify-content: center; align-items: center; gap: 12px; }
.side-tab span { width: 4px; height: 1px; background: #e08a2a; }
.side-tab .green { background: #5a9d43; }

/* status bar */
.status { flex: none; display: flex; align-items: flex-start; height: 12px; overflow: hidden; background: linear-gradient(#c8c8c8, #e4e4e4); border-top: 1px solid #aaa; font: 8px/14px "DejaVu Sans", "Noto Sans CJK SC", sans-serif; color: #222; }
.hint { flex: 0 0 555px; padding-left: 1px; white-space: nowrap; }
.worksets, .picks { display: flex; align-items: center; gap: 4px; height: 14px; line-height: 12px; }
.worksets select { height: 14px; padding-left: 3px; border: 1px solid #ddd; color: #666; background: #fff url("data:image/svg+xml,%3Csvg xmlns='http://www.w3.org/2000/svg' width='6' height='4'%3E%3Cpath d='M0 0l3 3 3-3' fill='none' stroke='%23aaa'/%3E%3C/svg%3E") no-repeat right 2px center; }
.ws { width: 116px; }
.opt { width: 87px; }
.cnt { margin-right: 6px; }
.picks { margin-left: auto; padding-right: 36px; gap: 5px; }
.picks svg { width: 10px; height: 10px; }
.picks span { margin-left: -5px; }

/* floating items */
.upload { position: absolute; left: 931px; top: 20px; width: 73px; height: 17px; gap: 8px; justify-content: flex-start; color: #2f9cf0; background: linear-gradient(#e4f4fe, #b4defb); border: 1px solid #41a8f8; border-radius: 2px; }
.upload span { width: 20px; height: 15px; background: #1a9bfc; display: grid; place-items: center; }
.pointer { position: absolute; left: 549px; top: 99px; }
```
